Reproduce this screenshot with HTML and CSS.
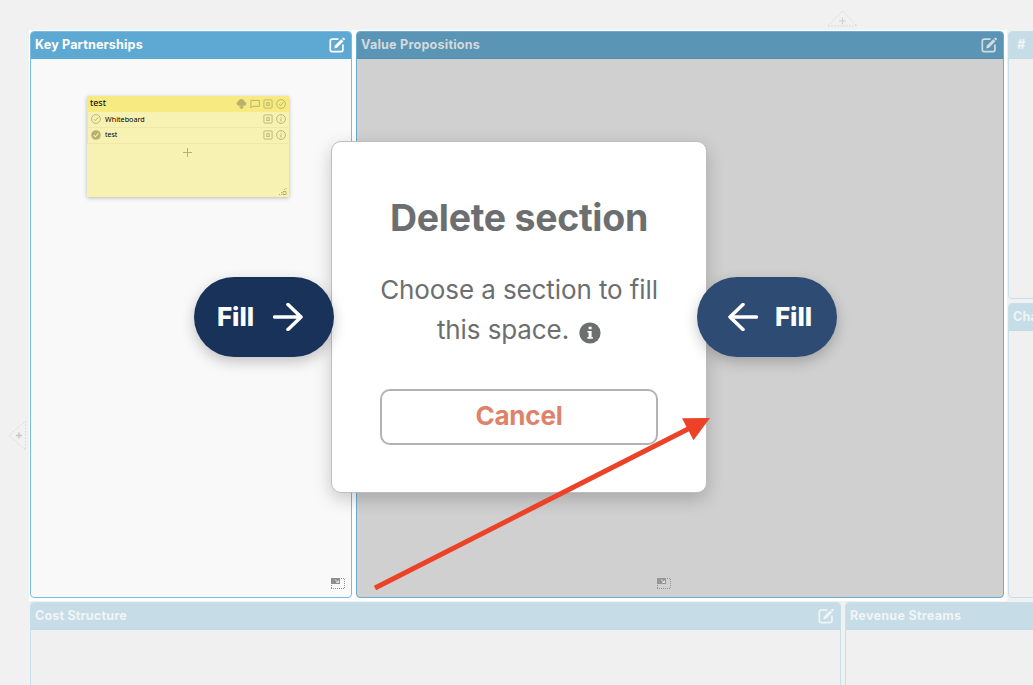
FILE: index.html
```html
<!DOCTYPE html>
<html lang="en">
<head>
<meta charset="utf-8">
<title>Delete section</title>
<link rel="stylesheet" href="styles.css">
</head>
<body>
<svg class="defs" width="0" height="0" aria-hidden="true">
  <symbol id="edit" viewBox="0 0 16 16">
    <path d="M9.5 2.2H3.2Q1.3 2.2 1.3 4V12.8Q1.3 14.6 3.2 14.6H12Q13.9 14.6 13.9 12.8V7.5" fill="none" stroke="currentColor" stroke-width="1.7"/>
    <path d="M5.2 11.6L5.9 8.6L12.3 2.2L14.4 4.3L8 10.8Z" fill="currentColor"/>
    <path d="M12.9 1.5L13.8 .7Q14.4 .3 15 .9L15.7 1.6Q16.2 2.2 15.7 2.8L14.9 3.6Z" fill="currentColor"/>
  </symbol>
  <symbol id="check" viewBox="0 0 10 10">
    <circle cx="5" cy="5" r="4.4" fill="none" stroke="currentColor" stroke-width=".9"/>
    <path d="M2.9 5.2L4.3 6.6L7.3 3.3" fill="none" stroke="currentColor" stroke-width="1"/>
  </symbol>
  <symbol id="checked" viewBox="0 0 10 10">
    <circle cx="5" cy="5" r="4.8" fill="currentColor"/>
    <path d="M2.7 5.2L4.3 6.8L7.4 3.4" fill="none" stroke="#f8f2b2" stroke-width="1.1"/>
  </symbol>
  <symbol id="info" viewBox="0 0 10 10">
    <circle cx="5" cy="5" r="4.4" fill="none" stroke="currentColor" stroke-width=".9"/>
    <path d="M5 2.5V3.4M5 4.4V7.6" stroke="currentColor" stroke-width="1"/>
  </symbol>
  <symbol id="tag" viewBox="0 0 10 10">
    <rect x=".9" y=".9" width="8.2" height="8.2" rx=".8" fill="none" stroke="currentColor" stroke-width=".9"/>
    <rect x="3.8" y="3.7" width="2.5" height="2.8" fill="none" stroke="currentColor" stroke-width=".9"/>
  </symbol>
  <symbol id="resize" viewBox="0 0 14 12">
    <path d="M0 0H9V6H0Z" fill="currentColor"/>
    <path d="M4 1.7L7 4.2M7.5 2.5V4.5H5.3" fill="none" stroke="#eee" stroke-width=".9"/>
    <path d="M10 .5H14M13.5 1V11M0 10.5H14M.5 7V11" fill="none" stroke="currentColor" stroke-dasharray="1 1"/>
  </symbol>
</svg>

<div class="stage">
  <main class="board">
    <div class="row row-top">
      <div class="active">
        <section class="section key">
          <header class="head"><h2>Key Partnerships</h2><svg class="edit"><use href="#edit"/></svg></header>
          <article class="note">
            <header class="note-head">
              <span class="note-title">test</span>
              <svg class="cloud" viewBox="0 0 11 10"><path d="M2.6 6.7A2.2 2.2 0 0 1 2 2.5A3.4 3.4 0 0 1 8.5 2.4A2.2 2.2 0 0 1 8.6 6.7Z" fill="currentColor"/><path d="M5.5 4V9.3M3.6 7.5L5.5 9.5L7.4 7.5" stroke="currentColor" stroke-width="1.2" fill="none"/></svg>
              <svg class="bubble" viewBox="0 0 10 10"><path d="M.9 9V1.4H9.3V7.3H2.6Z" fill="none" stroke="currentColor" stroke-width="1"/></svg>
              <svg class="ico"><use href="#tag"/></svg>
              <svg class="ico"><use href="#check"/></svg>
            </header>
            <div class="item"><svg class="ico"><use href="#check"/></svg><span class="item-text">Whiteboard</span><svg class="ico"><use href="#tag"/></svg><svg class="ico"><use href="#info"/></svg></div>
            <div class="item"><svg class="ico"><use href="#checked"/></svg><span class="item-text item-short">test</span><svg class="ico"><use href="#tag"/></svg><svg class="ico"><use href="#info"/></svg></div>
            <svg class="add" viewBox="0 0 9 9"><path d="M4.5 0V9M0 4.5H9" stroke="currentColor"/></svg>
            <svg class="grip" viewBox="0 0 8 8"><path d="M0 6.5H1M2 6.5H3M2 4.5H3M5 1.5H6M6.5 .5H7.5M4 6.5V3.5H7V6.5Z" fill="none" stroke="currentColor"/></svg>
          </article>
          <svg class="resize"><use href="#resize"/></svg>
        </section>
        <section class="section value">
          <header class="head"><h2>Value Propositions</h2><svg class="edit"><use href="#edit"/></svg></header>
          <svg class="resize"><use href="#resize"/></svg>
        </section>
      </div>
      <div class="side">
        <section class="section faded numbers"><header class="head"><h2>#</h2></header></section>
        <section class="section faded channels"><header class="head"><h2>Channels</h2></header></section>
      </div>
    </div>
    <div class="row row-bottom">
      <section class="section faded cost"><header class="head"><h2>Cost Structure</h2><svg class="edit"><use href="#edit"/></svg></header></section>
      <section class="section faded revenue"><header class="head"><h2>Revenue Streams</h2></header></section>
    </div>
  </main>

  <svg class="add-top" viewBox="0 0 32 18"><path d="M1 17L15.5 2L30 17Z" fill="none" stroke="#d6d6d6" stroke-dasharray="1.5 1.5"/><path d="M15.5 8.5V15.5M12 12H19" stroke="#cfcfcf"/></svg>
  <svg class="add-left" viewBox="0 0 18 32"><path d="M17.5 1V30L1 15.5Z" fill="none" stroke="#d6d6d6" stroke-dasharray="1.5 1.8"/><path d="M11 12.5V18.5M8 15.5H14" stroke="#c8c8c8" stroke-width="1.5"/></svg>

  <div class="dialog" role="dialog">
    <h1>Delete section</h1>
    <p><span>Choose a section to fill</span><br><span>this space.</span><svg class="info" viewBox="0 0 22 22"><circle cx="11" cy="11" r="10.6" fill="#6d6e70"/><path d="M9.6 4.7H12.6V7.3H9.6ZM8.4 9H12.6V15H13.8V16.7H8.4V15H9.6V10.6H8.4Z" fill="#fff"/></svg></p>
    <button class="cancel">Cancel</button>
  </div>
  <button class="fill fill-left"><span>Fill</span><svg viewBox="0 0 30 28"><path d="M1.5 14H28M15 1.5L28 14L15 26.5" /></svg></button>
  <button class="fill fill-right"><svg viewBox="0 0 30 28"><path d="M28.5 14H2M15 1.5L2 14L15 26.5" /></svg><span>Fill</span></button>

  <svg class="pointer" viewBox="0 0 1033 685"><path d="M375 588L692 427" stroke="#ec4328" stroke-width="5"/><path d="M682 418.3L710 418L693.5 440.3Z" fill="#ec4328"/></svg>
</div>
</body>
</html>
```
FILE: styles.css
```css
* { box-sizing: border-box; }
body { margin: 0; background: #f1f1f1; font-family: Inter, "Liberation Sans", sans-serif; }
h1, h2, p { margin: 0; }
svg { display: block; flex: none; }
button { font: inherit; margin: 0; padding: 0; }
.defs { position: absolute; }

.stage { position: relative; width: 1033px; height: 685px; overflow: hidden; }
.board { padding: 30px 0 0 29px; width: 1200px; }
.row { display: flex; }
.row-top { gap: 1px; }
.active { display: flex; gap: 4px; width: 978px; height: 571px; padding: 1px 3px 3px 1px; background: #fff; }

.section { border: 1px solid #7bbcde; border-radius: 4px; background: #f9f9f9; overflow: hidden; display: flex; flex-direction: column; }
.head { flex: none; height: 27px; display: flex; align-items: center; justify-content: space-between; padding: 0 6px 0 4px; background: #5ea9d4; border-bottom: 1px solid #57a9d0; color: #fff; }
.head h2 { font-size: 12.6px; font-weight: 700; line-height: 16px; letter-spacing: .15px; white-space: nowrap; }
.edit { width: 16px; height: 16px; }
.key { width: 322px; height: 567px; }
.value { width: 648px; height: 567px; background: #d0d0d0; border-color: #69add1; }
.value .head { background: #5a95b5; border-color: #5490ad; color: #d4dadd; }
.value h2 { letter-spacing: .22px; }

.side { display: flex; flex-direction: column; gap: 4px; padding-top: 1px; width: 160px; }
.faded { background: #f0f0f0; border-color: #c6dfe9; }
.faded .head { background: #c6dce6; border-color: #c3dae2; color: #f1f4f5; }
.numbers { height: 268px; }
.numbers h2 { padding-left: 4px; font-style: italic; }
.channels { height: 295px; }
.row-bottom { padding: 1px 0 0 1px; gap: 4px; }
.cost, .revenue { height: 100px; }
.cost { width: 811px; }
.revenue { width: 300px; }
.revenue h2 { letter-spacing: .25px; }

.resize { width: 14px; height: 12px; margin: auto 6px 7px auto; color: #8f8f8f; }
.value .resize { margin-right: 332px; color: #969696; }

.note { width: 202px; height: 101px; margin: 36.5px 0 0 56px; background: #f8f2b2; box-shadow: 0 1px 4px rgba(0,0,0,.26); color: #b9b06f; display: flex; flex-direction: column; font-family: "Noto Sans", sans-serif; }
.note-head { height: 16px; background: #f6ea80; display: flex; align-items: center; gap: 3px; padding: 1px 3.5px 0 3px; }
.note-title { margin-right: auto; color: #000; font-size: 9px; line-height: 14px; padding-bottom: 3px; }
.ico, .bubble { width: 10px; height: 10px; }
.bubble { margin-right: -.5px; }
.cloud { width: 11px; height: 10px; margin-right: .5px; }
.item { height: 16px; display: flex; align-items: center; gap: 3px; padding: 0 3.5px 0 2.5px; border-left: 1px solid #f6e877; border-bottom: 1px solid #eee9aa; }
.item-text { margin: 0 auto 1px 1.5px; color: #000; font-size: 7.2px; line-height: 12px; }
.item-short { font-size: 7px; }
.add { width: 9px; height: 9px; margin: 4px 0 0 95.5px; }
.grip { width: 8px; height: 8px; margin: auto 2px .5px auto; }

.add-top { position: absolute; left: 827px; top: 9px; width: 32px; height: 18px; }
.add-left { position: absolute; left: 7.5px; top: 419.5px; width: 18px; height: 32px; }

.dialog { position: absolute; left: 331px; top: 140.5px; width: 376px; height: 352.5px; padding: 53.5px 0 0; background: #fff; border: 1px solid #bebebe; border-radius: 10px; box-shadow: 0 6px 18px rgba(0,0,0,.2); text-align: center; color: #6d6e70; }
.dialog h1 { font-size: 37.5px; line-height: 46px; font-weight: 700; letter-spacing: -.3px; }
.dialog p { margin-top: 29px; font-size: 26px; line-height: 40px; letter-spacing: -.1px; white-space: nowrap; }
.info { display: inline-block; width: 22px; height: 22px; margin-left: 10px; vertical-align: -4.5px; }
.cancel { display: block; width: 278px; height: 56px; margin: 38.5px auto 0 48px; padding-bottom: 2px; border: 2px solid #b3b3b3; border-radius: 10px; background: #fff; color: #de836a; font-size: 26px; font-weight: 700; line-height: 50px; letter-spacing: -.2px; }

.fill { position: absolute; top: 277px; width: 140px; height: 80px; display: flex; align-items: center; border: 0; border-radius: 40px; color: #fff; font-size: 26px; font-weight: 800; letter-spacing: -.1px; box-shadow: 0 5px 14px rgba(0,0,0,.22); }
.fill span { width: 38px; padding-bottom: 1px; text-align: left; }
.fill svg { width: 30px; height: 28px; fill: none; stroke: #fff; stroke-width: 3.5; stroke-linecap: round; stroke-linejoin: round; }
.fill-left { left: 194px; padding-left: 23px; gap: 17.5px; background: #19325a; }
.fill-right { left: 697px; padding-left: 31px; gap: 17px; background: #2e4b73; }
.pointer { position: absolute; inset: 0; width: 1033px; height: 685px; pointer-events: none; }
```
